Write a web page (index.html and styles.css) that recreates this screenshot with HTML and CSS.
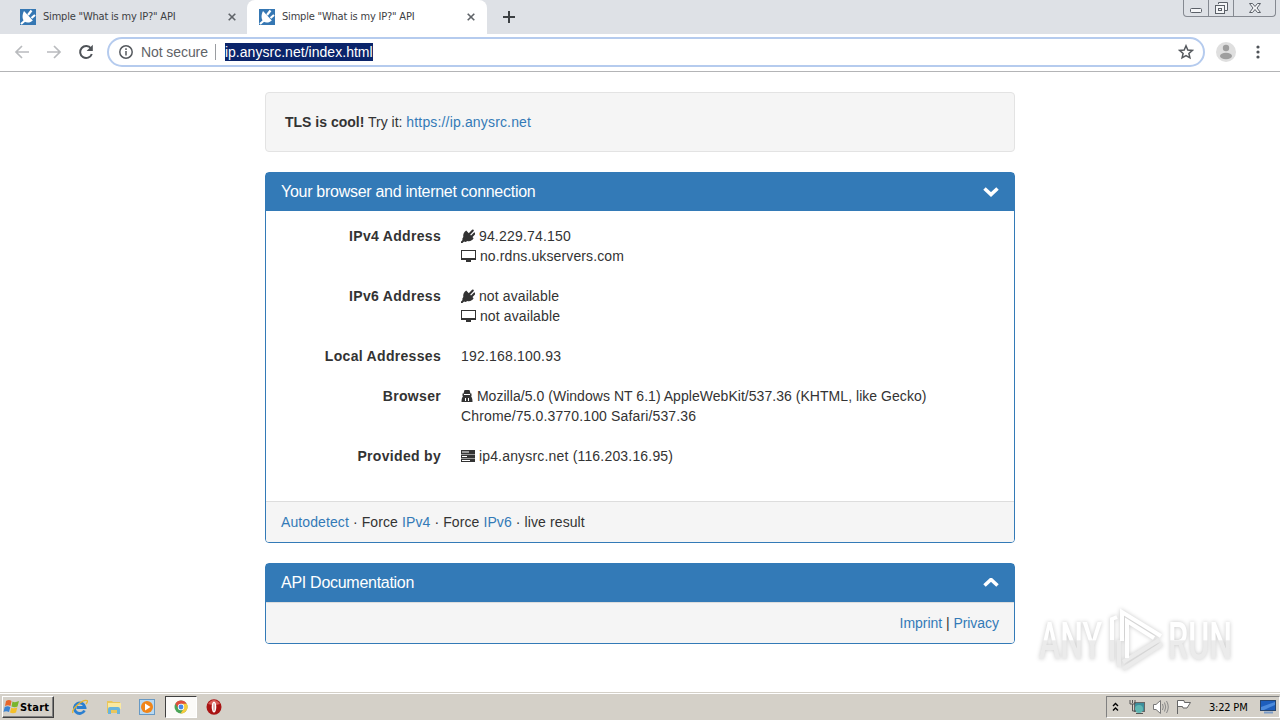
FILE: index.html
```html
<!DOCTYPE html>
<html lang="en">

<head>
    <meta charset="UTF-8">
    <meta name="viewport" content="width=device-width, initial-scale=1.0">
    <title>Simple "What is my IP?" API</title>
    <link rel="stylesheet" href="styles.css">
</head>

<body>
    <svg class="defs" width="0" height="0">
        <symbol id="plug" viewBox="0 0 14 14">
            <path d="M.8 13.2L3.500 10.500M8 5.500L11.800 1.500M10.300 7.800L13.500 4.500" fill="none" stroke="currentColor" stroke-width="2" stroke-linecap="round" />
            <path d="M5.200 1.600L12.600 9.200C11.500 11.200 9 12.800 6.500 12L4.500 13L2.300 12.300L1.200 10L2.300 8C1.800 5.500 3 2.800 5.200 1.600Z" fill="currentColor" />
        </symbol>
        <symbol id="screen" viewBox="0 0 15 14">
            <path fill="currentColor" fill-rule="evenodd" d="M0 1H15V11H10V13H5V11H0ZM1 2V9H14V2Z" />
        </symbol>
        <symbol id="favicon" viewBox="0 0 16 16">
            <rect width="16" height="16" fill="#3577b3" />
            <path d="M1 15L5 11.5M8 6L11.5 1.5M11.5 9L15 6" fill="none" stroke="#fff" stroke-width="2.2" />
            <path d="M4 2L12.8 11.5C10.5 13.7 7 14.2 4.4 12.5C2 10 2 6 4 2Z" fill="#fff" />
        </symbol>
    </svg>

    <div class="tabs">
        <div class="tab">
            <svg class="tab-icon"><use href="#favicon" /></svg>
            <span class="tab-title">Simple "What is my IP?" API</span>
            <svg class="tab-close" viewBox="0 0 8 8"><path d="M.7 .7L7.3 7.3M7.3 .7L.7 7.3" /></svg>
        </div>
        <div class="tab active">
            <svg class="tab-icon"><use href="#favicon" /></svg>
            <span class="tab-title">Simple "What is my IP?" API</span>
            <svg class="tab-close" viewBox="0 0 8 8"><path d="M.7 .7L7.3 7.3M7.3 .7L.7 7.3" /></svg>
        </div>
        <svg class="new-tab" viewBox="0 0 12 12"><path d="M6 0V12M0 6H12" /></svg>
        <div class="win-btns">
            <div class="win-btn min"><svg width="14" height="16" viewBox="0 0 14 16"><rect x="1.5" y="8.5" width="11" height="4" rx="1" /></svg></div>
            <div class="win-btn max"><svg width="14" height="16" viewBox="0 0 14 16"><path d="M4.5 4V2.5H13.5V10.5H11" /><rect x="1.5" y="5.5" width="9" height="8" /><rect x="4.500" y="8.500" width="3" height="2" /></svg></div>
            <div class="win-btn close"><svg width="14" height="16" viewBox="0 0 14 16"><path d="M1.500 3.500H4.500L7 6.500L9.500 3.500H12.500L9 8L12.500 12.500H9.500L7 9.500L4.500 12.500H1.500L5 8Z" /></svg></div>
        </div>
    </div>

    <div class="toolbar">
        <svg class="nav" viewBox="0 0 16 16"><path d="M15 8H2M8 2L2 8L8 14" /></svg>
        <svg class="nav" viewBox="0 0 16 16"><path d="M1 8H14M8 2L14 8L8 14" /></svg>
        <svg class="nav reload" viewBox="0 0 16 16"><path d="M13 4.500A6 6 0 1 0 13.800 10" /><path class="fill" d="M14.800 .8V7H8.600Z" /></svg>
        <div class="address">
            <svg class="info" viewBox="0 0 14 14"><circle cx="7" cy="7" r="6.200" /><path d="M7 6V10.500M7 3.300V4.900" /></svg>
            <span class="secure">Not secure</span>
            <span class="sep"></span>
            <span class="url">ip.anysrc.net/index.html</span>
            <svg class="star" viewBox="0 0 16 16"><path d="M8 1.800L9.800 6L14.300 6.400L10.900 9.400L11.900 13.800L8 11.500L4.100 13.800L5.100 9.400L1.700 6.400L6.200 6Z" /></svg>
        </div>
        <svg class="avatar" viewBox="0 0 20 20"><circle cx="10" cy="10" r="10" fill="#dfdfdf" /><circle cx="10" cy="6" r="3.200" fill="#9e9e9e" /><ellipse cx="10" cy="14" rx="6" ry="3.200" fill="#9e9e9e" /></svg>
        <svg class="dots" viewBox="0 0 4 14"><circle cx="2" cy="2" r="1.600" /><circle cx="2" cy="7" r="1.600" /><circle cx="2" cy="12" r="1.600" /></svg>
    </div>

    <div class="page">
        <div class="container">
            <div class="well"><b class="tls">TLS is cool!</b> <span class="try">Try it:</span> <a class="tls-link">https://ip.anysrc.net</a></div>

            <div class="panel">
                <div class="panel-heading">
                    <span class="head-text">Your browser and internet connection</span>
                    <svg class="chevron" viewBox="0 0 16 10"><path d="M1.500 1.500L8 7.500L14.500 1.500" /></svg>
                </div>
                <dl class="panel-body">
                    <dt>IPv4 Address</dt>
                    <dd>
                        <div><svg class="icon"><use href="#plug" /></svg> <span class="ip">94.229.74.150</span></div>
                        <div><svg class="icon wide"><use href="#screen" /></svg> <span class="rdns">no.rdns.ukservers.com</span></div>
                    </dd>
                    <dt>IPv6 Address</dt>
                    <dd>
                        <div><svg class="icon"><use href="#plug" /></svg> <span class="rdns">not available</span></div>
                        <div><svg class="icon wide"><use href="#screen" /></svg> <span class="rdns">not available</span></div>
                    </dd>
                    <dt>Local Addresses</dt>
                    <dd><span class="ip">192.168.100.93</span></dd>
                    <dt>Browser</dt>
                    <dd>
                        <div><svg class="icon spy" viewBox="0 0 12 14"><path d="M3.500 1H8.500L9.500 4.500H10.500V7H10C11 8.500 11.500 10 11.500 13H.5C.5 10 1 8.500 2 7H1.500V4.500H2.500Z" /><path class="cut" d="M3 5.500H9M4.500 9V12M7.500 9V12" /></svg> <span class="agent">Mozilla/5.0 (Windows NT 6.1) AppleWebKit/537.36 (KHTML, like Gecko)</span></div>
                        <div><span class="agent2">Chrome/75.0.3770.100 Safari/537.36</span></div>
                    </dd>
                    <dt>Provided by</dt>
                    <dd><div><svg class="icon" viewBox="0 0 14 14"><path d="M0 1H14V5H0ZM0 5.500H14V9H0ZM0 9.500H14V13H0Z" /><path class="cut" d="M1 3H8M1 7.500H6M1 11.500H9" /></svg> <span class="host">ip4.anysrc.net (116.203.16.95)</span></div></dd>
                </dl>
                <div class="panel-footer"><span class="links"><a>Autodetect</a> · Force <a>IPv4</a> · Force <a>IPv6</a> · live result</span></div>
            </div>

            <div class="panel">
                <div class="panel-heading">
                    <span class="head-text">API Documentation</span>
                    <svg class="chevron" viewBox="0 0 16 10"><path d="M1.500 7.500L8 1.500L14.500 7.500" /></svg>
                </div>
                <div class="panel-footer right"><span class="imprint"><a>Imprint</a> | <a>Privacy</a></span></div>
            </div>
        </div>

        <svg class="watermark" viewBox="0 0 240 85">
            <defs>
                <linearGradient id="fade" x1="0" y1="27" x2="0" y2="65" gradientUnits="userSpaceOnUse">
                    <stop offset=".46" stop-color="#fff" />
                    <stop offset=".5" stop-color="#ebebeb" />
                </linearGradient>
            </defs>
            <text x="19" y="64" textLength="63" lengthAdjust="spacingAndGlyphs">ANY</text>
            <text x="148" y="64" textLength="64" lengthAdjust="spacingAndGlyphs">RUN</text>
            <path class="shade" d="M92 66V44M99 72V45M103 67L139 45M103 74L142 49" />
            <path class="play" d="M92 45V24L97 22M102 46V17L141 41M107 63V26L134 43" />
        </svg>
    </div>

    <div class="taskbar">
        <div class="start">
            <svg width="17" height="16" viewBox="0 0 17 16">
                <path fill="#e8662a" d="M3 2Q6 0 8.500 2L7.500 7Q5 5.500 2 7Z" />
                <path fill="#79b52c" d="M9.500 2.500Q12 4 16 2L14.500 7.500Q12 9 8.500 7.500Z" />
                <path fill="#3b83d2" d="M1.700 8Q5 6.500 7.300 8.200L6 13Q3 11.500 .5 13Z" />
                <path fill="#f4bf28" d="M8.300 8.700Q11 10 14.300 8.500L13 13.500Q10 15 7 13.500Z" />
            </svg>
            <span>Start</span>
        </div>
        <div class="quick">
            <div class="task">
                <svg width="16" height="16" viewBox="0 0 16 16"><path d="M12.500 11.500A5.300 5.300 0 1 1 13 8.500H4.500" fill="none" stroke="#2a7fd0" stroke-width="2.800" /><path d="M1 14C-1 11 10 0 15 1.500C16 2 15 4 14 5" fill="none" stroke="#e7b52f" stroke-width="1.300" /></svg>
            </div>
            <div class="task">
                <svg width="16" height="16" viewBox="0 0 16 16"><path d="M1 2H6L7 3H14V14H1Z" fill="#e9c65c" /><path d="M2 4H15V10H2Z" fill="#fae9a0" /><path d="M2 15V10Q2 8 4 8H12Q14 8 14 10V15H11V11H5V15Z" fill="#69b4dc" /></svg>
            </div>
            <div class="task">
                <svg width="16" height="16" viewBox="0 0 16 16"><rect x=".5" y=".5" width="15" height="15" fill="#b8d9f2" stroke="#6799c4" /><circle cx="8" cy="8" r="6" fill="#f08519" /><path d="M6 4.500L11.500 8L6 11.500Z" fill="#fff" /></svg>
            </div>
            <div class="task pressed">
                <svg width="14" height="14" viewBox="0 0 14 14"><circle cx="7" cy="7" r="6.500" fill="#4aa457" /><path d="M1.300 3.800A6.500 6.500 0 0 1 12.700 3.800L7 4.500L4.500 8.500Z" fill="#df4d3c" /><path d="M12.700 3.800A6.500 6.500 0 0 1 6.500 13.500L9.800 8.500L7 3.800Z" fill="#f7cb3c" /><circle cx="7" cy="7" r="3.200" fill="#fff" /><circle cx="7" cy="7" r="2.400" fill="#4688e8" /></svg>
            </div>
            <div class="task">
                <svg width="16" height="16" viewBox="0 0 16 16"><ellipse cx="8" cy="8" rx="7.500" ry="7.800" fill="#a91414" /><path d="M2 5Q8-3 14 5Q8 7 2 5Z" fill="#d85d58" /><ellipse cx="8" cy="8" rx="2.300" ry="5.500" fill="#fff" /><ellipse cx="8" cy="8" rx=".8" ry="4" fill="#d9a0a0" /></svg>
            </div>
        </div>
        <div class="tray">
            <svg class="up" width="7" height="10" viewBox="0 0 7 10"><path d="M1 4L3.500 1.500L6 4M1 8.500L3.500 6L6 8.500" /></svg>
            <svg class="net" width="16" height="16" viewBox="0 0 16 16"><rect x="5.500" y="3.500" width="10" height="9" fill="#3c8e9c" stroke="#666" /><circle cx="10" cy="10" r="4" fill="#60b6b2" /><path d="M1 1V5H6V1M3.500 5V12H7M3.500 1V4" fill="none" stroke="#555" /><path d="M7 14.500H14" stroke="#555" /></svg>
            <svg class="sound" width="17" height="16" viewBox="0 0 17 16"><path d="M1.500 5.500H4L8.500 1.500V14.500L4 10.500H1.500Z" fill="#fff" stroke="#777" /><path d="M10.500 5Q12 8 10.500 11M12.500 3.500Q15 8 12.500 12.500M14.500 2Q18 8 14.500 14" fill="none" stroke="#888" /></svg>
            <svg class="flag" width="16" height="16" viewBox="0 0 16 16"><path d="M1.500 15V1.500H8L8.500 3.500H14.500L11 9H7L6.500 7.500H1.500" fill="#fff" stroke="#666" /></svg>
            <span class="clock">3:22 PM</span>
            <svg class="desktop" width="16" height="14" viewBox="0 0 16 14"><rect x=".5" y=".5" width="15" height="10" fill="#1d5ebc" stroke="#26456e" /><path d="M1 7L15 2V5L4 10H1Z" fill="#4c8bdc" /><path d="M4 12.500H13" stroke="#7b9cc8" stroke-width="2" /></svg>
        </div>
    </div>
</body>

</html>
```

FILE: styles.css
```css
* {
    margin: 0;
    padding: 0;
    box-sizing: border-box;
}

body {
    width: 1280px;
    height: 720px;
    overflow: hidden;
    display: flex;
    flex-direction: column;
    background-color: #fff;
    font-family: "Liberation Sans", Arial, sans-serif;
    font-size: 14px;
    line-height: 20px;
    color: #333;
}

svg {
    flex-shrink: 0;
}

.defs {
    position: absolute;
}

a {
    color: #337ab7;
}

/* tab strip */
.tabs {
    height: 34px;
    display: flex;
    background-color: #dee1e6;
}

.tab {
    width: 247px;
    height: 34px;
    display: flex;
    align-items: center;
    padding: 0 11px 0 20px;
}

.tab.active {
    width: 240px;
    padding: 0 12px;
    background-color: #fff;
    border-radius: 8px 8px 0 0;
}

.tab-icon {
    width: 16px;
    height: 16px;
    margin-right: 7px;
}

.tab-title {
    flex: 1;
    font-family: "DejaVu Sans Condensed", "DejaVu Sans", sans-serif;
    font-size: 11px;
    letter-spacing: -0.2px;
    white-space: nowrap;
    color: #3c4043;
}

.tab-close {
    width: 8px;
    height: 8px;
    stroke: #5f6368;
    stroke-width: 1.6;
}

.new-tab {
    width: 12px;
    height: 12px;
    margin: 11px 0 0 16px;
    stroke: #3c4043;
    stroke-width: 2;
}

.win-btns {
    height: 17px;
    display: flex;
    margin-left: auto;
    margin-right: 4px;
    border: 1px solid #858991;
    border-top: 0;
    border-radius: 0 0 4px 4px;
}

.win-btn {
    width: 25px;
    text-align: center;
    line-height: 0;
    border-right: 1px solid #858991;
}

.win-btn svg {
    fill: #f4f5f7;
    stroke: #5b6068;
}

.win-btn.close {
    width: 41px;
    border-right: 0;
}

/* toolbar */
.toolbar {
    height: 38px;
    display: flex;
    align-items: center;
    padding: 0 20px 1px 14px;
    border-bottom: 1px solid #b3b4b6;
}

.nav {
    width: 16px;
    height: 16px;
    margin-right: 16px;
    fill: none;
    stroke: #b9bbbe;
    stroke-width: 1.7;
}

.nav.reload {
    margin-right: 13px;
    stroke: #4f5358;
    stroke-width: 2;
}

.nav .fill {
    fill: #4f5358;
    stroke: none;
}

.address {
    width: 1098px;
    height: 30px;
    display: flex;
    align-items: center;
    padding: 0 9px 0 10px;
    border: 2px solid #b5cbee;
    border-radius: 15px;
}

.info {
    width: 14px;
    height: 14px;
    fill: none;
    stroke: #55595e;
    stroke-width: 1.5;
}

.secure {
    margin-left: 8px;
    color: #5f6368;
    letter-spacing: -0.08px;
}

.sep {
    width: 1px;
    height: 16px;
    margin: 0 9px 0 7px;
    background-color: #9a9da1;
}

.url {
    height: 18px;
    line-height: 18px;
    background-color: #0a246a;
    color: #fff;
    letter-spacing: 0.03px;
}

.star {
    width: 16px;
    height: 16px;
    margin-left: auto;
    fill: none;
    stroke: #55595e;
    stroke-width: 1.5;
}

.avatar {
    width: 20px;
    height: 20px;
    margin-left: 11px;
}

.dots {
    width: 4px;
    height: 14px;
    margin-left: 20px;
    fill: #4f5358;
}

/* page */
.page {
    height: 620px;
    position: relative;
    padding-top: 20px;
}

.container {
    width: 750px;
    margin: 0 auto;
}

.well {
    height: 60px;
    padding: 19px;
    margin-bottom: 20px;
    background-color: #f5f5f5;
    border: 1px solid #e3e3e3;
    border-radius: 4px;
    white-space: nowrap;
}

.tls-link {
    letter-spacing: 0.16px;
}

.panel {
    border: 1px solid #337ab7;
    border-radius: 4px;
    margin-bottom: 20px;
}

.panel-heading {
    height: 38px;
    display: flex;
    align-items: center;
    justify-content: space-between;
    padding: 0 15px;
    background-color: #337ab7;
    color: #fff;
    font-size: 16px;
}

.head-text {
    letter-spacing: -0.28px;
}

.chevron {
    width: 16px;
    height: 10px;
    fill: none;
    stroke: #fff;
    stroke-width: 3.6;
}

.panel-body {
    height: 290px;
    display: grid;
    grid-template-columns: 160px 1fr;
    column-gap: 20px;
    row-gap: 20px;
    align-content: start;
    padding: 15px;
}

dt {
    font-weight: bold;
    text-align: right;
    letter-spacing: 0.31px;
}

dd {
    white-space: nowrap;
}

dd > div {
    height: 20px;
}

.ip {
    letter-spacing: 0.2px;
}

.rdns {
    letter-spacing: 0.12px;
}

.agent {
    letter-spacing: 0.04px;
}

.agent2 {
    letter-spacing: 0.14px;
}

.host {
    letter-spacing: 0.18px;
}

.links {
    letter-spacing: 0.1px;
}

.imprint {
    letter-spacing: -0.04px;
}

.icon {
    width: 14px;
    height: 14px;
    vertical-align: -2px;
    fill: currentColor;
}

.icon.wide {
    width: 15px;
}

.icon.spy {
    width: 12px;
}

.icon .cut {
    fill: none;
    stroke: #fff;
    stroke-width: 1;
}

.panel-footer {
    height: 41px;
    padding: 10px 15px;
    background-color: #f5f5f5;
    border-top: 1px solid #ddd;
    border-radius: 0 0 3px 3px;
}

.panel-footer.right {
    text-align: right;
}

.watermark {
    position: absolute;
    left: 1020px;
    top: 523px;
    width: 240px;
    height: 85px;
    overflow: visible;
    filter: drop-shadow(0 0 2px rgba(0, 0, 0, 0.22));
}

.watermark text {
    font-family: Roboto, sans-serif;
    font-size: 51px;
    font-weight: 500;
    fill: url(#fade);
}

.watermark path {
    fill: none;
    stroke: #fff;
    stroke-width: 4;
}

.watermark .shade {
    stroke: #ebebeb;
}

/* taskbar */
.taskbar {
    height: 28px;
    display: flex;
    align-items: center;
    background-color: #d4d0c8;
    border-top: 1px solid #d4d0c8;
    box-shadow: inset 0 1px #fff;
    padding-top: 1px;
}

.start {
    width: 52px;
    height: 22px;
    display: flex;
    align-items: center;
    margin-left: 2px;
    border: 1px solid;
    border-color: #fff #404040 #404040 #fff;
    box-shadow: inset -1px -1px #808080;
    font: bold 11px "DejaVu Sans Condensed", sans-serif;
    letter-spacing: 0.2px;
    color: #000;
}

.quick {
    display: flex;
    margin-left: 10px;
}

.task {
    width: 32px;
    height: 22px;
    display: flex;
    align-items: center;
    justify-content: center;
    margin-right: 1.6px;
}

.task.pressed {
    background-color: #fbfaf8;
    border: 1px solid;
    border-color: #404040 #fff #fff #404040;
}

.tray {
    width: 174px;
    height: 22px;
    display: flex;
    align-items: center;
    margin-left: auto;
    border: 1px solid;
    border-color: #808080 #fff #fff #808080;
    padding-left: 5px;
}

.up {
    fill: none;
    stroke: #000;
    stroke-width: 1.4;
}

.net {
    margin-left: 10px;
}

.sound {
    margin-left: 7px;
}

.flag {
    margin-left: 7px;
}

.clock {
    width: 41px;
    margin-left: 17px;
    font: 11px "DejaVu Sans Condensed", sans-serif;
    letter-spacing: -0.2px;
    white-space: nowrap;
    color: #000;
}

.desktop {
    margin-left: 10px;
}
```
